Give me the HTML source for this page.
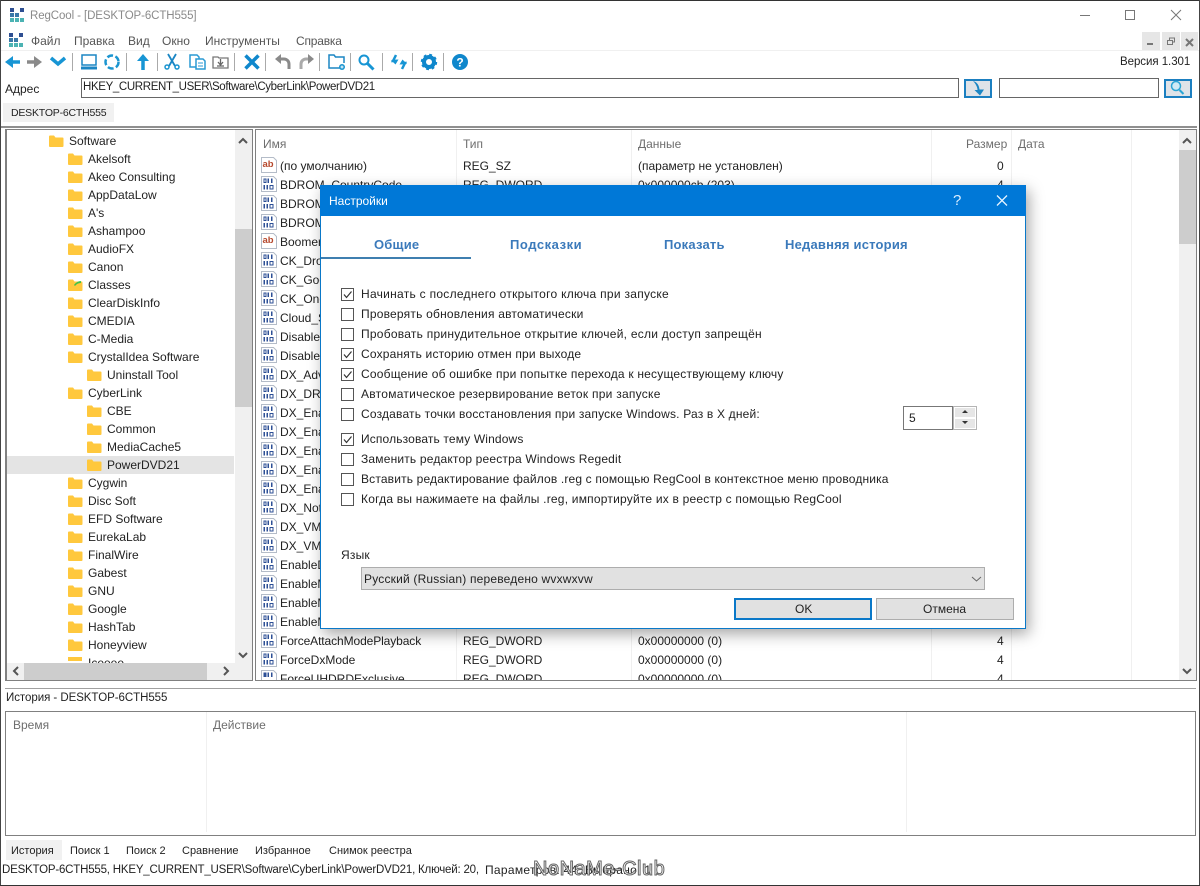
<!DOCTYPE html>
<html><head><meta charset="utf-8"><style>
html,body{margin:0;padding:0;background:#fff}
#p{position:relative;width:1200px;height:886px;overflow:hidden;background:#fff;font:12px/16px "Liberation Sans","DejaVu Sans",sans-serif;color:#222}
#p div,#p span{position:absolute;white-space:nowrap}
.b{box-sizing:border-box}
.h{color:#6e6e6e}
svg{position:absolute;left:0;top:0}
#tree,#list{overflow:hidden}
.tb{font-size:13px;font-weight:bold;color:#3b7abb;letter-spacing:.2px}
.bt{font-size:11px}
</style></head><body><div id="p">
<div style="left:0;top:0;width:1200px;height:1px;background:#333"></div>
<div style="left:0;top:0;width:1px;height:886px;background:#444"></div>
<div style="left:1199px;top:0;width:1px;height:886px;background:#444"></div>
<div style="left:0;top:885px;width:1200px;height:1px;background:#333"></div>
<span style="left:30px;top:8px;color:#8a8a8a;font-size:11.5px;letter-spacing:-.1px">RegCool - [DESKTOP-6CTH555]</span>
<span style="left:31px;top:33px;color:#555">Файл</span>
<span style="left:74px;top:33px;color:#555">Правка</span>
<span style="left:128px;top:33px;color:#555">Вид</span>
<span style="left:162px;top:33px;color:#555">Окно</span>
<span style="left:205px;top:33px;color:#555">Инструменты</span>
<span style="left:296px;top:33px;color:#555;letter-spacing:-.2px">Справка</span>
<div style="left:1px;top:50px;width:1198px;height:1px;background:#f0f0f0"></div>
<div style="left:1142px;top:32px;width:18px;height:18px;background:#e6e6e6"></div>
<div style="left:1162px;top:32px;width:18px;height:18px;background:#e6e6e6"></div>
<div style="left:1181px;top:32px;width:17px;height:18px;background:#e6e6e6"></div>
<span style="left:1120px;top:54px;color:#222;font-size:11.5px;letter-spacing:-.05px">Версия 1.301</span>
<span style="left:5px;top:81px">Адрес</span>
<div class="b" style="left:81px;top:78px;width:878px;height:20px;border:1px solid #666"></div>
<span style="left:83px;top:79px;font-size:11.5px;letter-spacing:-.36px">HKEY_CURRENT_USER\Software\CyberLink\PowerDVD21</span>
<div class="b" style="left:964px;top:79px;width:28px;height:19px;border:2px solid #1b7fc0;background:#dfe3e8"></div>
<div class="b" style="left:999px;top:78px;width:160px;height:20px;border:1px solid #666"></div>
<div class="b" style="left:1164px;top:79px;width:28px;height:19px;border:2px solid #1b7fc0;background:#dfe3e8"></div>
<div style="left:3px;top:103px;width:111px;height:19px;background:#f1f1f1"></div>
<span style="left:11px;top:105px;font-size:10.5px;letter-spacing:-.2px">DESKTOP-6CTH555</span>
<div style="left:1px;top:126px;width:1196px;height:2px;background:#8f8f8f"></div>

<div class="b" id="tree" style="left:5px;top:129px;width:248px;height:552px;border:1px solid #808080;border-left-width:2px">
<div style="left:0;top:326px;width:227px;height:18px;background:#e4e4e4"></div>
<span style="left:62px;top:3px">Software</span>
<span style="left:81px;top:21px">Akelsoft</span>
<span style="left:81px;top:39px">Akeo Consulting</span>
<span style="left:81px;top:57px">AppDataLow</span>
<span style="left:81px;top:75px">A's</span>
<span style="left:81px;top:93px">Ashampoo</span>
<span style="left:81px;top:111px">AudioFX</span>
<span style="left:81px;top:129px">Canon</span>
<span style="left:81px;top:147px">Classes</span>
<span style="left:81px;top:165px">ClearDiskInfo</span>
<span style="left:81px;top:183px">CMEDIA</span>
<span style="left:81px;top:201px">C-Media</span>
<span style="left:81px;top:219px">CrystalIdea Software</span>
<span style="left:100px;top:237px">Uninstall Tool</span>
<span style="left:81px;top:255px">CyberLink</span>
<span style="left:100px;top:273px">CBE</span>
<span style="left:100px;top:291px">Common</span>
<span style="left:100px;top:309px">MediaCache5</span>
<span style="left:100px;top:327px">PowerDVD21</span>
<span style="left:81px;top:345px">Cygwin</span>
<span style="left:81px;top:363px">Disc Soft</span>
<span style="left:81px;top:381px">EFD Software</span>
<span style="left:81px;top:399px">EurekaLab</span>
<span style="left:81px;top:417px">FinalWire</span>
<span style="left:81px;top:435px">Gabest</span>
<span style="left:81px;top:453px">GNU</span>
<span style="left:81px;top:471px">Google</span>
<span style="left:81px;top:489px">HashTab</span>
<span style="left:81px;top:507px">Honeyview</span>
<span style="left:81px;top:525px">Iceeee</span>
<div style="left:228px;top:0;width:17px;height:550px;background:#f0f0f0"></div>
<div style="left:228px;top:99px;width:17px;height:178px;background:#cdcdcd"></div>
<div style="left:0;top:533px;width:245px;height:17px;background:#f0f0f0"></div>
<div style="left:17px;top:533px;width:183px;height:17px;background:#cdcdcd"></div>
</div>

<div class="b" id="list" style="left:255px;top:129px;width:942px;height:552px;border:1px solid #808080">
<div style="left:200px;top:0;width:1px;height:550px;background:#f0f0f0"></div>
<div style="left:375px;top:0;width:1px;height:550px;background:#f0f0f0"></div>
<div style="left:675px;top:0;width:1px;height:550px;background:#f0f0f0"></div>
<div style="left:755px;top:0;width:1px;height:550px;background:#f0f0f0"></div>
<div style="left:875px;top:0;width:1px;height:550px;background:#f0f0f0"></div>
<span class="h" style="left:7px;top:6px">Имя</span>
<span class="h" style="left:207px;top:6px">Тип</span>
<span class="h" style="left:382px;top:6px">Данные</span>
<span class="h" style="left:710px;top:6px">Размер</span>
<span class="h" style="left:762px;top:6px">Дата</span>
<div style="left:0;top:1px;width:0;height:0">
<span style="left:24px;top:27px">(по умолчанию)</span><span style="left:207px;top:27px">REG_SZ</span><span style="left:382px;top:27px">(параметр не установлен)</span><span style="left:741px;top:27px">0</span>
<span style="left:24px;top:46px">BDROM_CountryCode</span><span style="left:207px;top:46px">REG_DWORD</span><span style="left:382px;top:46px">0x000000cb (203)</span><span style="left:741px;top:46px">4</span>
<span style="left:24px;top:65px">BDROM_Language</span>
<span style="left:24px;top:84px">BDROM_Region</span>
<span style="left:24px;top:103px">Boomerang</span>
<span style="left:24px;top:122px">CK_Dropbox</span>
<span style="left:24px;top:141px">CK_GoogleDrive</span>
<span style="left:24px;top:160px">CK_OneDrive</span>
<span style="left:24px;top:179px">Cloud_Sync</span>
<span style="left:24px;top:198px">DisableD3D</span>
<span style="left:24px;top:217px">DisableDxva</span>
<span style="left:24px;top:236px">DX_Advanced</span>
<span style="left:24px;top:255px">DX_DRM</span>
<span style="left:24px;top:274px">DX_Enable</span>
<span style="left:24px;top:293px">DX_Enable</span>
<span style="left:24px;top:312px">DX_Enable</span>
<span style="left:24px;top:331px">DX_Enable</span>
<span style="left:24px;top:350px">DX_Enable</span>
<span style="left:24px;top:369px">DX_NotUse</span>
<span style="left:24px;top:388px">DX_VMR</span>
<span style="left:24px;top:407px">DX_VMR</span>
<span style="left:24px;top:426px">EnableDxva</span>
<span style="left:24px;top:445px">EnableMode</span>
<span style="left:24px;top:464px">EnableMode</span>
<span style="left:24px;top:483px">EnableMode</span>
<span style="left:24px;top:502px;letter-spacing:-.1px">ForceAttachModePlayback</span><span style="left:207px;top:502px">REG_DWORD</span><span style="left:382px;top:502px">0x00000000 (0)</span><span style="left:741px;top:502px">4</span>
<span style="left:24px;top:521px">ForceDxMode</span><span style="left:207px;top:521px">REG_DWORD</span><span style="left:382px;top:521px">0x00000000 (0)</span><span style="left:741px;top:521px">4</span>
<span style="left:24px;top:540px">ForceUHDRDExclusive</span><span style="left:207px;top:540px">REG_DWORD</span><span style="left:382px;top:540px">0x00000000 (0)</span><span style="left:741px;top:540px">4</span>
</div>
<div style="left:923px;top:0;width:17px;height:550px;background:#f0f0f0"></div>
<div style="left:923px;top:20px;width:17px;height:94px;background:#cdcdcd"></div>
</div>

<div style="left:5px;top:688px;width:1191px;height:1px;background:#a0a0a0"></div>
<span style="left:6px;top:690px;font-size:11.5px;letter-spacing:-.05px">История - DESKTOP-6CTH555</span>
<div class="b" style="left:5px;top:711px;width:1191px;height:125px;border:1px solid #808080"></div>
<div style="left:206px;top:712px;width:1px;height:120px;background:#f0f0f0"></div>
<div style="left:906px;top:712px;width:1px;height:120px;background:#f0f0f0"></div>
<span class="h" style="left:13px;top:717px">Время</span>
<span class="h" style="left:213px;top:717px">Действие</span>
<div style="left:6px;top:840px;width:56px;height:20px;background:#f1f1f1"></div>
<span class="bt" style="left:11px;top:843px">История</span>
<span class="bt" style="left:70px;top:843px">Поиск 1</span>
<span class="bt" style="left:126px;top:843px">Поиск 2</span>
<span class="bt" style="left:182px;top:843px">Сравнение</span>
<span class="bt" style="left:255px;top:843px">Избранное</span>
<span class="bt" style="left:329px;top:843px">Снимок реестра</span>
<span style="left:2px;top:862px;font-size:11.5px;letter-spacing:-.2px">DESKTOP-6CTH555, HKEY_CURRENT_USER\Software\CyberLink\PowerDVD21, Ключей: 20,</span>
<span style="left:485px;top:862px;letter-spacing:.3px">Параметров: 44, Выбрано: 1</span>
<span style="left:533px;top:857px;font-size:20px;line-height:24px;color:#fff;-webkit-text-stroke:1px #666;letter-spacing:.5px">NoNaMe-Club</span>

<svg width="1200" height="886" viewBox="0 0 1200 886">
<defs>
<path id="f" d="M0 2.500q0-1 1-1h4l1.500 2h7q1 0 1 1v7.500q0 1-1 1H1q-1 0-1-1z" fill="#ffc83d"/>
<g id="r"><path d="M.5 .5h12l3 3V15.500H.5z" fill="#fff" stroke="#b4bcc8"/><g fill="#2c4f96"><rect x="2.500" y="2.500" width="3" height="4.500"/><rect x="6.500" y="2.500" width="1.500" height="4.500"/><rect x="10" y="2.500" width="1.500" height="4.500"/><rect x="2.500" y="9" width="1.500" height="4.500"/><rect x="5.500" y="9" width="1.500" height="4.500"/><rect x="8.500" y="9" width="4" height="4.500"/></g><rect x="3.500" y="3.500" width="1" height="2.500" fill="#fff"/><rect x="9.500" y="10" width="2" height="2.500" fill="#fff"/></g>
<g id="a"><path d="M.5 .5h12l3 3V15.500H.5z" fill="#fff" stroke="#b4bcc8"/><text x="1.500" y="10" font-family="Liberation Sans" font-weight="bold" font-size="9.500" fill="#b5482d">ab</text></g>
<path id="up" d="M-4 2l4-4 4 4" fill="none" stroke="#555" stroke-width="2"/>
</defs>
<!-- logos -->
<g><g fill="#2e4f92"><rect x="10" y="8" width="4" height="4"/><rect x="20" y="8" width="4" height="4"/></g><g fill="#3a78a8"><rect x="10" y="13" width="4" height="4"/><rect x="15" y="13" width="4" height="4"/></g><g fill="#4cb3b3"><rect x="10" y="18" width="4" height="4"/><rect x="15" y="18" width="4" height="4"/><rect x="20" y="18" width="4" height="4"/></g></g>
<g transform="translate(-1,25)"><g fill="#2e4f92"><rect x="10" y="8" width="4" height="4"/><rect x="20" y="8" width="4" height="4"/></g><g fill="#3a78a8"><rect x="10" y="13" width="4" height="4"/><rect x="15" y="13" width="4" height="4"/></g><g fill="#4cb3b3"><rect x="10" y="18" width="4" height="4"/><rect x="15" y="18" width="4" height="4"/><rect x="20" y="18" width="4" height="4"/></g></g>
<!-- window controls -->
<path d="M1080 15.500h10" stroke="#777"/><rect x="1125.500" y="10.500" width="9" height="9" fill="none" stroke="#777"/><path d="M1171 10l10 10M1181 10l-10 10" stroke="#777"/>
<path d="M1147 44h6" stroke="#777" stroke-width="2"/><path d="M1167.500 40.500h5v4h-5zM1169.500 40v-2h5v4h-2" fill="none" stroke="#777"/><path d="M1186 39l7 7M1193 39l-7 7" stroke="#777" stroke-width="2"/>
<!-- toolbar -->
<g fill="none" stroke="#aaa"><path d="M72.500 53v18M126.500 53v18M157.500 53v18M234.500 53v18M265.500 53v18M319.500 53v18M350.500 53v18M382.500 53v18M412.500 53v18M443.500 53v18"/></g>
<g fill="none" stroke-linecap="butt">
<path d="M20 62H8" stroke="#1795d4" stroke-width="3.500"/><path d="M13 56l-8 6 8 6z" fill="#1795d4"/>
<path d="M27 62h12" stroke="#8a8a8a" stroke-width="3.500"/><path d="M34 56l8 6-8 6z" fill="#8a8a8a"/>
<path d="M51 58l7 6 7-6" stroke="#1795d4" stroke-width="3.500"/>
<rect x="82" y="55" width="14" height="10" stroke="#1b86c4" stroke-width="1.500"/><path d="M81 68h16" stroke="#1b86c4" stroke-width="3"/>
<circle cx="112" cy="62" r="6.500" stroke="#1b95d0" stroke-width="2.500" stroke-dasharray="6 2.500"/>
<path d="M143 70V58" stroke="#1795d4" stroke-width="3.500"/><path d="M137 61l6-7 6 7z" fill="#1795d4"/>
<path d="M168 54l7 12M176 54l-7 12" stroke="#1b86c4" stroke-width="1.800"/><circle cx="167" cy="67" r="2" stroke="#1b95d0" stroke-width="1.500"/><circle cx="177" cy="67" r="2" stroke="#1b95d0" stroke-width="1.500"/>
<path d="M190 55h7l2 2v10h-9z" stroke="#2a9ad4" stroke-width="1.500" fill="#fff"/><path d="M196 59h7l2 2v8h-9z" stroke="#2a9ad4" stroke-width="1.500" fill="#fff"/><path d="M198 63h5M198 66h5" stroke="#2a9ad4"/>
<path d="M213 57h5l1 1h9v10h-15z" stroke="#777" stroke-width="1.300"/><path d="M220.500 59v5M218 62l2.500 3 2.500-3M217 66h7" stroke="#666" stroke-width="1.300"/>
<path d="M245.500 55.500l13 13M258.500 55.500l-13 13" stroke="#0f87cc" stroke-width="3.500"/>
<path d="M277 59h7a5 5 0 0 1 5 5v5" stroke="#8a8a8a" stroke-width="3"/><path d="M281 54l-6 5 6 5z" fill="#8a8a8a"/>
<path d="M312 59h-6a5 5 0 0 0-5 5v5" stroke="#aaa" stroke-width="3"/><path d="M308 54l6 5-6 5z" fill="#8a8a8a"/>
<path d="M344 68h-15v-13h5l1.500 2h8.500v6" stroke="#1b86c4" stroke-width="1.500"/><circle cx="342" cy="67" r="3" fill="#1b95d0"/><path d="M340.500 67h3M342 65.500v3" stroke="#fff"/>
<circle cx="364" cy="60" r="4.500" stroke="#1795d4" stroke-width="2"/><path d="M367.500 63.500l6 6" stroke="#1795d4" stroke-width="3"/>
<path d="M396 55l-3 6h4" stroke="#1795d4" stroke-width="2.500"/><path d="M392 56l-1 7 6 1z" fill="#1795d4" opacity="0"/><path d="M391 60l4.500 4.500 3-5z" fill="#1795d4"/><path d="M402 69l3-6h-4" stroke="#1795d4" stroke-width="2.500"/><path d="M407 64l-4.500-4.500-3 5z" fill="#1795d4"/>
<circle cx="429" cy="62" r="5" stroke="#0f87cc" stroke-width="4"/><circle cx="429" cy="62" r="7.200" stroke="#0f87cc" stroke-width="2" stroke-dasharray="2.800 2.850"/>
</g>
<circle cx="460" cy="62" r="8" fill="#0f87cc"/><text x="460" y="66.500" text-anchor="middle" font-family="Liberation Sans" font-weight="bold" font-size="12" fill="#fff">?</text>
<!-- address btn icons -->
<path d="M973 81c4 1 6 4 6.500 8.500H984l-4 6-5.500-5.500h3c0-3-2-6.500-4.500-9z" fill="#1b86c4"/>
<circle cx="1176" cy="86" r="4.500" fill="#cfeaf5" stroke="#2aa5d5" stroke-width="1.500"/><path d="M1179.500 90l4 4" stroke="#2aa5d5" stroke-width="2"/>
<!-- tree folders -->
<use href="#f" x="49" y="134"/>
<use href="#f" x="68" y="152"/><use href="#f" x="68" y="170"/><use href="#f" x="68" y="188"/><use href="#f" x="68" y="206"/><use href="#f" x="68" y="224"/><use href="#f" x="68" y="242"/><use href="#f" x="68" y="260"/><use href="#f" x="68" y="278"/><use href="#f" x="68" y="296"/><use href="#f" x="68" y="314"/><use href="#f" x="68" y="332"/><use href="#f" x="68" y="350"/>
<use href="#f" x="87" y="368"/>
<use href="#f" x="68" y="386"/>
<use href="#f" x="87" y="404"/><use href="#f" x="87" y="422"/><use href="#f" x="87" y="440"/><use href="#f" x="87" y="458"/>
<use href="#f" x="68" y="476"/><use href="#f" x="68" y="494"/><use href="#f" x="68" y="512"/><use href="#f" x="68" y="530"/><use href="#f" x="68" y="548"/><use href="#f" x="68" y="566"/><use href="#f" x="68" y="584"/><use href="#f" x="68" y="602"/><use href="#f" x="68" y="620"/><use href="#f" x="68" y="638"/>
<path d="M74 285q3-4 7-4v2q-4 0-6 3z" fill="#3fc24a"/>
<path d="M68 657h14v4H68z" fill="#ffc83d"/>
<!-- list icons -->
<use href="#a" x="261" y="157"/>
<use href="#r" x="261" y="176"/><use href="#r" x="261" y="195"/><use href="#r" x="261" y="214"/>
<use href="#a" x="261" y="233"/>
<use href="#r" x="261" y="252"/><use href="#r" x="261" y="271"/><use href="#r" x="261" y="290"/><use href="#r" x="261" y="309"/><use href="#r" x="261" y="328"/><use href="#r" x="261" y="347"/><use href="#r" x="261" y="366"/><use href="#r" x="261" y="385"/><use href="#r" x="261" y="404"/><use href="#r" x="261" y="423"/><use href="#r" x="261" y="442"/><use href="#r" x="261" y="461"/><use href="#r" x="261" y="480"/><use href="#r" x="261" y="499"/><use href="#r" x="261" y="518"/><use href="#r" x="261" y="537"/><use href="#r" x="261" y="556"/><use href="#r" x="261" y="575"/><use href="#r" x="261" y="594"/><use href="#r" x="261" y="613"/><use href="#r" x="261" y="632"/><use href="#r" x="261" y="651"/>
<g transform="translate(261,670)"><path d="M.5 10V.5h12l3 3V10" fill="#fff" stroke="#b4bcc8"/><g fill="#2c4f96"><rect x="2.500" y="2.500" width="3" height="4.500"/><rect x="6.500" y="2.500" width="1.500" height="4.500"/><rect x="10" y="2.500" width="1.500" height="4.500"/></g></g>
<!-- scroll arrows -->
<use href="#up" x="243" y="141"/>
<path d="M239 653l4 4 4-4" fill="none" stroke="#555" stroke-width="2"/>
<path d="M18 667l-4 4 4 4M224 667l4 4-4 4" fill="none" stroke="#555" stroke-width="2"/>
<use href="#up" x="1187" y="141"/>
<path d="M1183 669l4 4 4-4" fill="none" stroke="#555" stroke-width="2"/>
</svg>

<!-- dialog -->
<div class="b" style="left:320px;top:185px;width:706px;height:444px;background:#fff;border:1px solid #0a78c8;box-shadow:3px 5px 14px rgba(0,0,0,.35)"></div>
<div style="left:320px;top:185px;width:706px;height:31px;background:#0078d7"></div>
<div style="left:0;top:0;width:1200px;height:886px">
<span style="left:329px;top:193px;color:#fff">Настройки</span>
<span style="left:953px;top:192px;color:#dbeeff;font-size:15px;line-height:18px">?</span>
<span class="tb" style="left:374px;top:237px">Общие</span>
<span class="tb" style="left:510px;top:237px;letter-spacing:.55px">Подсказки</span>
<span class="tb" style="left:664px;top:237px">Показать</span>
<span class="tb" style="left:785px;top:237px">Недавняя история</span>
<div style="left:321px;top:257px;width:150px;height:2px;background:#3f7fb0"></div>
<span style="left:361px;top:286px;letter-spacing:.28px">Начинать с последнего открытого ключа при запуске</span>
<span style="left:361px;top:306px;letter-spacing:.21px">Проверять обновления автоматически</span>
<span style="left:361px;top:326px;letter-spacing:.25px">Пробовать принудительное открытие ключей, если доступ запрещён</span>
<span style="left:361px;top:346px;letter-spacing:.18px">Сохранять историю отмен при выходе</span>
<span style="left:361px;top:366px;letter-spacing:.21px">Сообщение об ошибке при попытке перехода к несуществующему ключу</span>
<span style="left:361px;top:386px;letter-spacing:.26px">Автоматическое резервирование веток при запуске</span>
<span style="left:361px;top:406px;letter-spacing:.18px">Создавать точки восстановления при запуске Windows. Раз в X дней:</span>
<span style="left:361px;top:431px;letter-spacing:.14px">Использовать тему Windows</span>
<span style="left:361px;top:451px;letter-spacing:.18px">Заменить редактор реестра Windows Regedit</span>
<span style="left:361px;top:471px;letter-spacing:.16px">Вставить редактирование файлов .reg с помощью RegCool в контекстное меню проводника</span>
<span style="left:361px;top:491px;letter-spacing:.21px">Когда вы нажимаете на файлы .reg, импортируйте их в реестр с помощью RegCool</span>
<span style="left:341px;top:547px;letter-spacing:.2px">Язык</span>
<div class="b" style="left:361px;top:567px;width:624px;height:23px;background:#e1e1e1;border:1px solid #adadad"></div>
<span style="left:364px;top:571px;letter-spacing:.19px">Русский (Russian) переведено wvxwxvw</span>
<div class="b" style="left:903px;top:406px;width:50px;height:24px;border:1px solid #777;background:#fff"></div>
<span style="left:909px;top:410px">5</span>
<div class="b" style="left:953px;top:406px;width:24px;height:24px;border:1px solid #b5b5b5;background:#fff"></div>
<div style="left:955px;top:408px;width:20px;height:9px;background:#e6e6e6"></div>
<div style="left:955px;top:419px;width:20px;height:9px;background:#e6e6e6"></div>
<div class="b" style="left:734px;top:598px;width:138px;height:22px;background:#e1e1e1;border:2px solid #0a78c8"></div>
<span style="left:795px;top:601px">OK</span>
<div class="b" style="left:876px;top:598px;width:138px;height:22px;background:#e1e1e1;border:1px solid #adadad"></div>
<span style="left:923px;top:601px">Отмена</span>
</div>
<svg width="1200" height="886" viewBox="0 0 1200 886">
<path d="M997 195.500l10 10M1007 195.500l-10 10" stroke="#e6f3ff" stroke-width="1.300"/>
<g fill="#fff" stroke="#555"><rect x="341.500" y="288.500" width="12" height="12"/><rect x="341.500" y="308.500" width="12" height="12"/><rect x="341.500" y="328.500" width="12" height="12"/><rect x="341.500" y="348.500" width="12" height="12"/><rect x="341.500" y="368.500" width="12" height="12"/><rect x="341.500" y="388.500" width="12" height="12"/><rect x="341.500" y="408.500" width="12" height="12"/><rect x="341.500" y="433.500" width="12" height="12"/><rect x="341.500" y="453.500" width="12" height="12"/><rect x="341.500" y="473.500" width="12" height="12"/><rect x="341.500" y="493.500" width="12" height="12"/></g>
<g fill="none" stroke="#333" stroke-width="1.200"><path d="M344 294.500l2.500 3 5-6"/><path d="M344 354.500l2.500 3 5-6"/><path d="M344 374.500l2.500 3 5-6"/><path d="M344 439.500l2.500 3 5-6"/></g>
<path d="M965 410l-3 3h6zM965 424l-3-3h6z" fill="#333"/>
<path d="M972 577l4.500 4 4.500-4" fill="none" stroke="#666"/>
</svg>
</div></body></html>
